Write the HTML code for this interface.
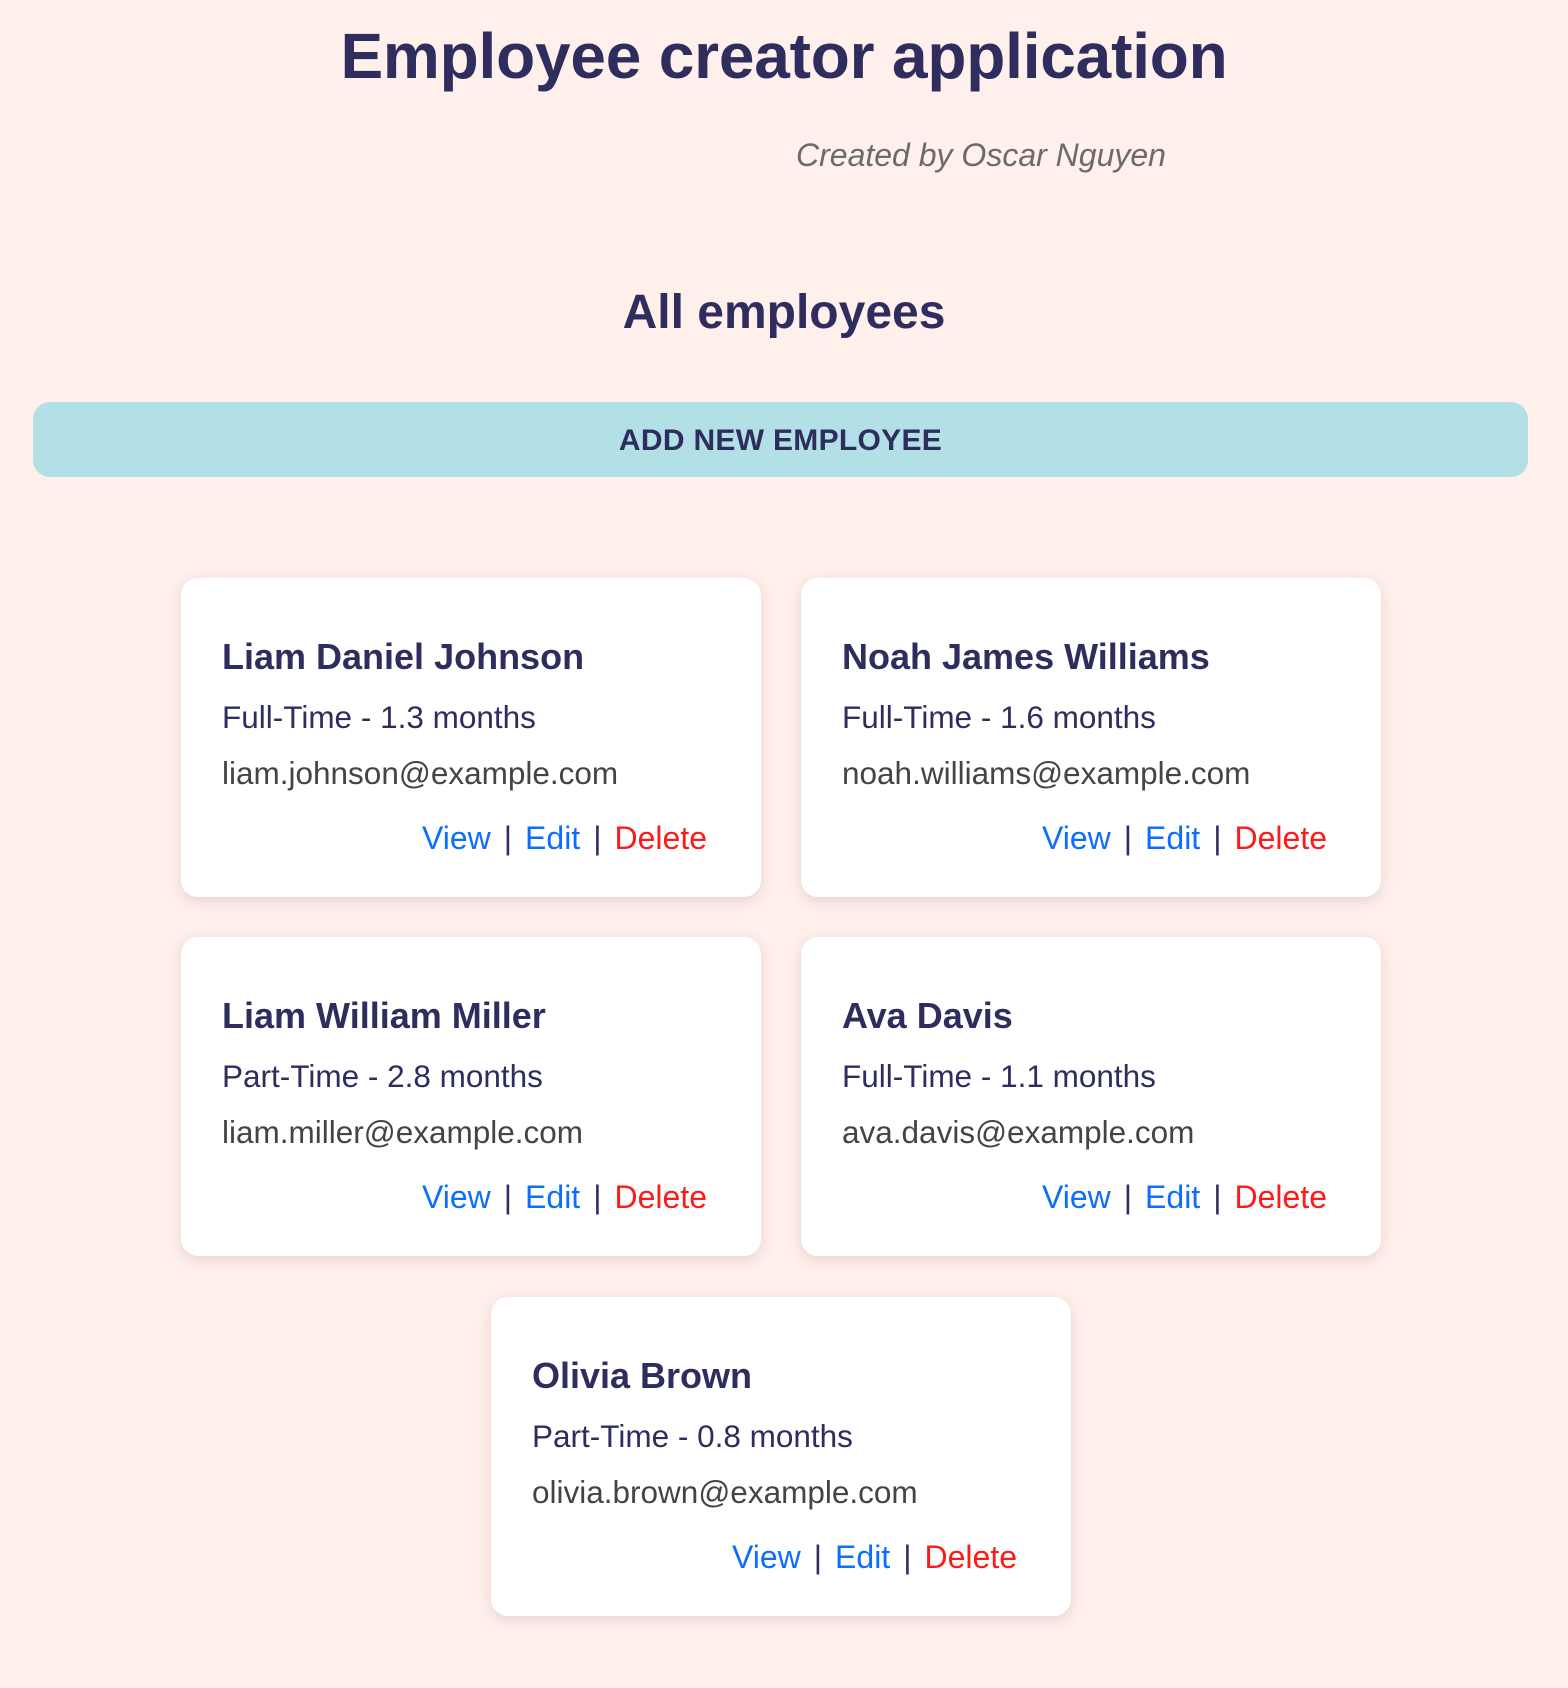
<!DOCTYPE html>
<html><head><meta charset="utf-8"><style>
*{margin:0;padding:0;box-sizing:border-box}
body{width:1568px;height:1688px;background:#fff0ec;font-family:"Liberation Sans",Arial,sans-serif;color:#2e2d5e;position:relative;overflow:hidden}
h1{position:absolute;left:0;width:1568px;top:20px;text-align:center;font-size:64px;font-weight:bold;line-height:72px;letter-spacing:-0.2px}
.sub{position:absolute;left:796px;top:137px;font-size:32px;font-style:italic;color:#6b6b6b;line-height:36px}
h2{position:absolute;left:0;width:1568px;top:286px;text-align:center;font-size:48px;font-weight:bold;line-height:54px}
.btn{position:absolute;left:33px;top:402px;width:1495px;height:75px;background:#b2e0e6;border-radius:17px;text-align:center;line-height:77px;font-size:30px;font-weight:bold;letter-spacing:0.3px}
.card{position:absolute;width:580px;height:319px;background:#fff;border-radius:17px;box-shadow:0 4px 14px rgba(120,80,70,0.18)}
.card .n{position:absolute;left:41px;top:59px;font-size:36px;font-weight:bold;line-height:40px}
.card .t{position:absolute;left:41px;top:122px;font-size:31.5px;line-height:34px}
.card .e{position:absolute;left:41px;top:178px;font-size:31.5px;line-height:34px;color:#444}
.card .l{position:absolute;right:54px;top:243px;font-size:32px;line-height:34px}
.v{color:#0d6efd}.d{color:#ff1a1a}.s{margin:0 13px}
</style></head><body>
<h1>Employee creator application</h1>
<div class="sub">Created by Oscar Nguyen</div>
<h2>All employees</h2>
<div class="btn">ADD NEW EMPLOYEE</div>

<div class="card" style="left:181px;top:578px"><div class="n">Liam Daniel Johnson</div><div class="t">Full-Time - 1.3 months</div><div class="e">liam.johnson@example.com</div><div class="l"><span class="v">View</span><span class="s">|</span><span class="v">Edit</span><span class="s">|</span><span class="d">Delete</span></div></div>
<div class="card" style="left:801px;top:578px"><div class="n">Noah James Williams</div><div class="t">Full-Time - 1.6 months</div><div class="e">noah.williams@example.com</div><div class="l"><span class="v">View</span><span class="s">|</span><span class="v">Edit</span><span class="s">|</span><span class="d">Delete</span></div></div>
<div class="card" style="left:181px;top:937px"><div class="n">Liam William Miller</div><div class="t">Part-Time - 2.8 months</div><div class="e">liam.miller@example.com</div><div class="l"><span class="v">View</span><span class="s">|</span><span class="v">Edit</span><span class="s">|</span><span class="d">Delete</span></div></div>
<div class="card" style="left:801px;top:937px"><div class="n">Ava Davis</div><div class="t">Full-Time - 1.1 months</div><div class="e">ava.davis@example.com</div><div class="l"><span class="v">View</span><span class="s">|</span><span class="v">Edit</span><span class="s">|</span><span class="d">Delete</span></div></div>
<div class="card" style="left:491px;top:1297px"><div class="n">Olivia Brown</div><div class="t">Part-Time - 0.8 months</div><div class="e">olivia.brown@example.com</div><div class="l"><span class="v">View</span><span class="s">|</span><span class="v">Edit</span><span class="s">|</span><span class="d">Delete</span></div></div>
</body></html>
